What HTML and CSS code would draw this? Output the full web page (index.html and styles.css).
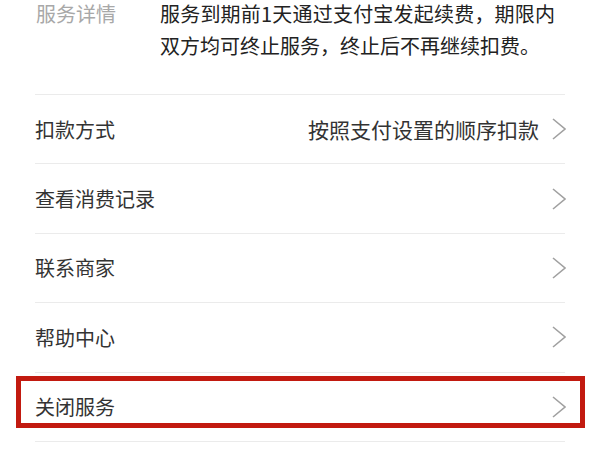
FILE: index.html
```html
<!DOCTYPE html>
<html lang="zh-CN">
<head>
    <meta charset="UTF-8">
    <meta name="viewport" content="width=device-width, initial-scale=1.0">
    <title>服务详情</title>
    <link rel="stylesheet" href="styles.css">
</head>
<body>
    <div class="detail">
        <div class="detail-label">服务详情</div>
        <div class="detail-text">
            <span class="line-full">服务到期前1天通过支付宝发起续费，期限内</span>
            <span class="line">双方均可终止服务，终止后不再继续扣费。</span>
        </div>
    </div>

    <div class="menu">
        <div class="row">
            <span class="row-title">扣款方式</span>
            <span class="row-value">按照支付设置的顺序扣款</span>
            <svg class="chevron" viewBox="0 0 14 22"><polyline points="1,1 13,11 1,21"/></svg>
        </div>
        <div class="row">
            <span class="row-title">查看消费记录</span>
            <svg class="chevron" viewBox="0 0 14 22"><polyline points="1,1 13,11 1,21"/></svg>
        </div>
        <div class="row">
            <span class="row-title">联系商家</span>
            <svg class="chevron" viewBox="0 0 14 22"><polyline points="1,1 13,11 1,21"/></svg>
        </div>
        <div class="row">
            <span class="row-title">帮助中心</span>
            <svg class="chevron" viewBox="0 0 14 22"><polyline points="1,1 13,11 1,21"/></svg>
        </div>
        <div class="row highlight">
            <span class="row-title">关闭服务</span>
            <svg class="chevron" viewBox="0 0 14 22"><polyline points="1,1 13,11 1,21"/></svg>
            <span class="mark"></span>
        </div>
    </div>
</body>
</html>
```

FILE: styles.css
```css
body {
    margin: 0;
    background: #fff;
    font-family: "Noto Sans CJK SC", "Noto Sans", sans-serif;
    color: #333;
}
.detail {
    display: flex;
    margin-top: -2px;
    padding: 0 0 32px 36px;
    line-height: 32px;
}
.detail-label {
    width: 124px;
    flex-shrink: 0;
    font-size: 20px;
    color: #a8a8a8;
}
.detail-text {
    width: 395px;
    font-size: 20px;
    color: #222;
    white-space: nowrap;
}
.detail-text span {
    display: block;
}
.line-full {
    text-align: justify;
    text-align-last: justify;
}
.menu {
    margin: 0 35px;
    border-top: 1px solid #ebebeb;
}
.row {
    display: flex;
    align-items: center;
    height: 69.4px;
    box-sizing: border-box;
    border-bottom: 1px solid #ebebeb;
    font-size: 20px;
    color: #333;
}
.row-value {
    margin-left: auto;
    margin-right: 13px;
    font-size: 21px;
}
.chevron {
    width: 14px;
    height: 22px;
    margin-left: auto;
    margin-right: -1px;
    fill: none;
    stroke: #a0a0a0;
    stroke-width: 1.6;
}
.row-value + .chevron {
    margin-left: 0;
}
.highlight {
    position: relative;
}
.mark {
    position: absolute;
    left: -19px;
    top: 3px;
    width: 569px;
    height: 52px;
    box-sizing: border-box;
    border: 5px solid #c21a10;
}
```
